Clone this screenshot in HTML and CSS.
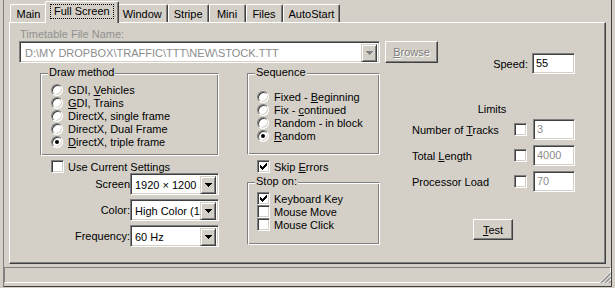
FILE: index.html
```html
<!DOCTYPE html>
<html>
<head>
  <title>Full Screen Settings</title>
  <link rel="stylesheet" href="styles.css">
</head>
<body>
  <div class="window">
    <div class="tabs">
      <div class="tab">Main</div>
      <div class="tab selected"><span class="focus">Full Screen</span></div>
      <div class="tab">Window</div>
      <div class="tab">Stripe</div>
      <div class="tab">Mini</div>
      <div class="tab">Files</div>
      <div class="tab">AutoStart</div>
    </div>

    <div class="panel">
      <div class="left">
        <div class="file-label">Timetable File Name:</div>
        <div class="combo disabled">
          <span class="combo-text">D:\MY DROPBOX\TRAFFIC\TTT\NEW\STOCK.TTT</span>
          <span class="drop-btn">
            <svg width="7" height="4" shape-rendering="crispEdges"><path d="M0 0h7v1h-1v1h-1v1h-1v1h-1v-1h-1v-1h-1v-1h-1z" fill="#808080"/></svg>
          </span>
        </div>

        <div class="groups">
          <div class="col col-draw">
            <div class="group group-draw">
              <span class="group-title">Draw method</span>
              <div class="opt"><span class="radio"></span><span>GDI, <u>V</u>ehicles</span></div>
              <div class="opt"><span class="radio"></span><span><u>G</u>DI, Trains</span></div>
              <div class="opt"><span class="radio"></span><span>DirectX, single frame</span></div>
              <div class="opt"><span class="radio"></span><span>DirectX, Dual Frame</span></div>
              <div class="opt"><span class="radio on"></span><span><u>D</u>irectX, triple frame</span></div>
            </div>

            <div class="opt check-row"><span class="check"></span><span>Use Current Settings</span></div>

            <div class="field">
              <span class="field-label">Screen</span>
              <div class="combo select">
                <span class="combo-text">1920 × 1200</span>
                <span class="drop-btn">
                  <svg width="7" height="4" shape-rendering="crispEdges"><path d="M0 0h7v1h-1v1h-1v1h-1v1h-1v-1h-1v-1h-1v-1h-1z"/></svg>
                </span>
              </div>
            </div>
            <div class="field">
              <span class="field-label">Color:</span>
              <div class="combo select">
                <span class="combo-text">High Color (16 bit)</span>
                <span class="drop-btn">
                  <svg width="7" height="4" shape-rendering="crispEdges"><path d="M0 0h7v1h-1v1h-1v1h-1v1h-1v-1h-1v-1h-1v-1h-1z"/></svg>
                </span>
              </div>
            </div>
            <div class="field">
              <span class="field-label">Frequency:</span>
              <div class="combo select">
                <span class="combo-text">60 Hz</span>
                <span class="drop-btn">
                  <svg width="7" height="4" shape-rendering="crispEdges"><path d="M0 0h7v1h-1v1h-1v1h-1v1h-1v-1h-1v-1h-1v-1h-1z"/></svg>
                </span>
              </div>
            </div>
          </div>

          <div class="col col-seq">
            <div class="group group-seq">
              <span class="group-title">Sequence</span>
              <div class="opt"><span class="radio"></span><span>Fixed - <u>B</u>eginning</span></div>
              <div class="opt"><span class="radio"></span><span>Fix - <u>c</u>ontinued</span></div>
              <div class="opt"><span class="radio"></span><span>Random - in block</span></div>
              <div class="opt"><span class="radio on"></span><span><u>R</u>andom</span></div>
            </div>

            <div class="opt check-row">
              <span class="check"><svg width="7" height="7" shape-rendering="crispEdges"><path d="M6 0h1v3h-1v1h-1v1h-1v1h-1v1h-1v-1h-1v-1h-1v-3h1v1h1v1h1v-1h1v-1h1z"/></svg></span>
              <span>Skip <u>E</u>rrors</span>
            </div>

            <div class="group group-stop">
              <span class="group-title">Stop on:</span>
              <div class="opt">
                <span class="check"><svg width="7" height="7" shape-rendering="crispEdges"><path d="M6 0h1v3h-1v1h-1v1h-1v1h-1v1h-1v-1h-1v-1h-1v-3h1v1h1v1h1v-1h1v-1h1z"/></svg></span>
                <span>Keyboard Key</span>
              </div>
              <div class="opt"><span class="check"></span><span>Mouse Move</span></div>
              <div class="opt"><span class="check"></span><span>Mouse Click</span></div>
            </div>
          </div>
        </div>
      </div>

      <div class="right">
        <div class="top-row">
          <div class="btn browse"><span><u>B</u>rowse</span></div>
          <div class="speed">
            <span>Speed:</span>
            <div class="edit speed-input">55</div>
          </div>
        </div>

        <div class="limits-title">Limits</div>
        <div class="limit-row">
          <span class="limit-label">Number of <u>T</u>racks</span>
          <span class="check"></span>
          <div class="edit limit-input">3</div>
        </div>
        <div class="limit-row">
          <span class="limit-label">Total <u>L</u>ength</span>
          <span class="check"></span>
          <div class="edit limit-input">4000</div>
        </div>
        <div class="limit-row">
          <span class="limit-label">Processor Load</span>
          <span class="check"></span>
          <div class="edit limit-input">70</div>
        </div>

        <div class="btn test"><span><u>T</u>est</span></div>
      </div>
    </div>

    <div class="status">
      <svg class="grip" width="12" height="12">
        <path d="M12 0.5L0.5 12M12 4.5L4.5 12M12 8.5L8.5 12" stroke="#fff"/>
        <path d="M12 1.5L1.5 12M12 2.5L2.5 12M12 5.5L5.5 12M12 6.5L6.5 12M12 9.5L9.5 12M12 10.5L10.5 12" stroke="#808080"/>
      </svg>
    </div>
  </div>
</body>
</html>
```

FILE: styles.css
```css
* {
  box-sizing: border-box;
}
body {
  margin: 0;
  background: #d4d0c8;
  font: 11px "Liberation Sans", Arial, sans-serif;
  color: #000;
}
.window {
  margin-left: 3px;
  width: 609px;
  height: 287px;
  border-left: 1px solid #808080;
  border-right: 1px solid #404040;
  border-bottom: 1px solid #404040;
}

/* tab strip */
.tabs {
  display: flex;
  align-items: flex-end;
  height: 22px;
  padding-left: 6px;
}
.tab {
  display: flex;
  align-items: center;
  justify-content: center;
  height: 18px;
  min-width: 37px;
  padding: 0 5px;
  background: #d4d0c8;
  border: 1px solid;
  border-bottom: none;
  border-color: #fff #404040 #fff #fff;
  box-shadow: inset -1px 0 #808080;
  border-radius: 2px 2px 0 0;
  white-space: nowrap;
}
.tab.selected {
  position: relative;
  z-index: 1;
  height: 22px;
  margin: 0 -2px -1px;
  padding: 0 5px 3px;
}
.focus {
  line-height: 13px;
  padding: 0 3px;
  outline: 1px dotted #000;
}

/* page */
.panel {
  display: flex;
  margin-left: 5px;
  width: 597px;
  height: 242px;
  padding: 5px 0 0 9px;
  border: 1px solid;
  border-color: #fff #404040 #404040 #fff;
  box-shadow: inset -1px -1px #808080;
}
.left {
  width: 361px;
}
.file-label {
  height: 13px;
  line-height: 13px;
  padding-left: 1px;
  color: #909090;
}

/* combo boxes and edits */
.combo, .edit {
  background: #fff;
  border: 1px solid;
  border-color: #808080 #fff #fff #808080;
  box-shadow: inset 1px 1px #404040, inset -1px -1px #d4d0c8;
}
.combo {
  display: flex;
  height: 22px;
  padding: 2px;
}
.combo-text {
  flex: 1;
  padding-left: 2px;
  line-height: 18px;
  white-space: nowrap;
  overflow: hidden;
}
.combo.disabled .combo-text {
  padding-left: 3px;
  color: #8c8c8c;
}
.drop-btn {
  display: flex;
  align-items: center;
  justify-content: center;
  width: 16px;
  height: 18px;
  background: #d4d0c8;
  border: 1px solid;
  border-color: #d4d0c8 #404040 #404040 #d4d0c8;
  box-shadow: inset 1px 1px #fff, inset -1px -1px #808080;
}
.edit {
  height: 21px;
  padding: 0 3px;
  line-height: 19px;
}

/* groups */
.groups {
  display: flex;
  margin-top: 10px;
}
.col-draw {
  margin-left: 21px;
  width: 179px;
}
.col-seq {
  margin-left: 28px;
  width: 133px;
}
.group {
  position: relative;
  border: 1px solid #808080;
  border-right-color: #fff;
  border-bottom-color: #fff;
  box-shadow: inset 1px 1px #fff, inset -1px -1px #808080;
  padding-left: 9px;
}
.group-title {
  position: absolute;
  top: -8px;
  left: 7px;
  padding: 0 1px;
  line-height: 13px;
  background: #d4d0c8;
}
.group-draw {
  height: 83px;
  padding: 9px 0 0 10px;
}
.group-seq {
  height: 82px;
  padding-top: 16px;
}
.group-stop {
  height: 63px;
  margin-top: 9px;
  padding-top: 9px;
}

/* options */
.opt {
  display: flex;
  align-items: center;
  height: 13px;
  white-space: nowrap;
}
.radio {
  position: relative;
  flex: none;
  width: 12px;
  height: 12px;
  margin-right: 5px;
  border-radius: 50%;
  background: #fff;
  border: 1px solid;
  border-color: #808080 #fff #fff #808080;
  box-shadow: inset 1px 1px #404040, inset -1px -1px #d4d0c8;
}
.radio.on::after {
  content: "";
  position: absolute;
  left: 3px;
  top: 3px;
  width: 4px;
  height: 4px;
  border-radius: 50%;
  background: #000;
}
.check {
  display: flex;
  align-items: center;
  justify-content: center;
  flex: none;
  width: 13px;
  height: 13px;
  margin-right: 4px;
  background: #fff;
  border: 1px solid;
  border-color: #808080 #fff #fff #808080;
  box-shadow: inset 1px 1px #404040, inset -1px -1px #d4d0c8;
}
.col-draw .check-row {
  margin: 4px 0 0 11px;
}
.col-seq .check-row {
  margin: 5px 0 0 10px;
}

/* screen fields */
.field {
  display: flex;
  height: 22px;
}
.field + .field {
  margin-top: 4px;
}
.field-label {
  width: 90px;
  text-align: right;
  line-height: 22px;
}
.select {
  width: 89px;
}

/* right side */
.right {
  width: 190px;
  margin-left: 5px;
  padding-top: 13px;
}
.top-row {
  display: flex;
  align-items: flex-start;
}
.btn {
  display: flex;
  align-items: center;
  justify-content: center;
  background: #d4d0c8;
  border: 1px solid;
  border-color: #fff #404040 #404040 #fff;
  box-shadow: inset -1px -1px #808080;
}
.browse {
  width: 53px;
  height: 22px;
  color: #808080;
  text-shadow: 1px 1px #fff;
}
.speed {
  display: flex;
  align-items: center;
  margin: 12px 0 0 auto;
}
.speed-input {
  width: 43px;
  margin-left: 4px;
}
.limits-title {
  margin: 29px 0 0 27px;
  width: 163px;
  line-height: 13px;
  text-align: center;
  padding-right: 3px;
}
.limit-row {
  display: flex;
  align-items: center;
  height: 21px;
  margin: 5px 0 0 27px;
}
.limits-title + .limit-row {
  margin-top: 3px;
}
.limit-label {
  flex: 1;
}
.limit-row .check {
  margin-right: 6px;
}
.limit-input {
  width: 42px;
  color: #8c8c8c;
}
.test {
  width: 40px;
  height: 21px;
  margin: 27px 0 0 88px;
}

/* status bar */
.status {
  position: relative;
  margin-top: 3px;
  height: 16px;
  border: 1px solid;
  border-color: #808080 #fff #fff #808080;
}
.grip {
  position: absolute;
  right: -1px;
  bottom: -1px;
}
```
